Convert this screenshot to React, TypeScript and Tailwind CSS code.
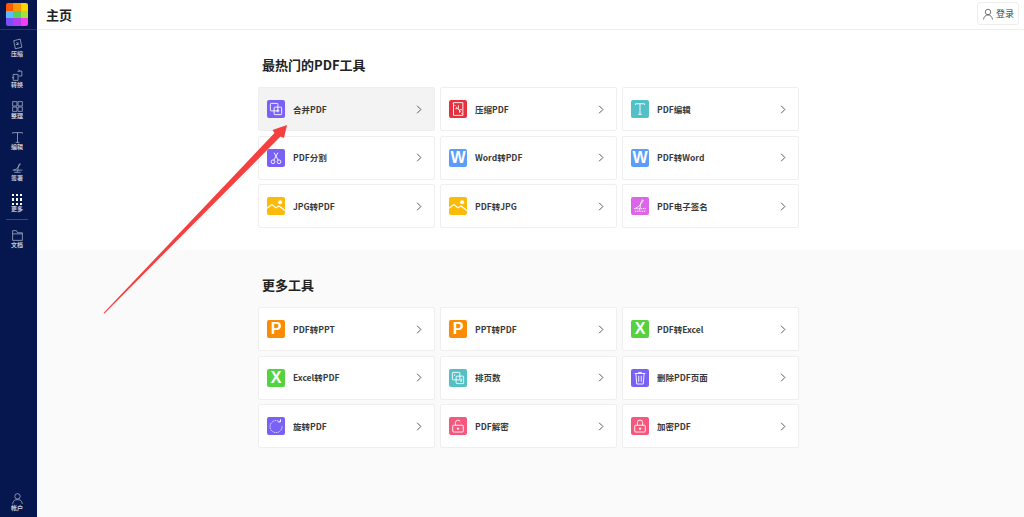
import React from "react";

const S = (p: { children: React.ReactNode; c?: string; w?: number }) => (
  <svg viewBox="0 0 24 24" fill="none" stroke={p.c ?? "#fff"} strokeWidth={p.w ?? 1.2} className="w-full h-full">
    {p.children}
  </svg>
);

const glyph: Record<string, React.ReactNode> = {
  merge: <S><rect x="4.5" y="4.5" width="10" height="10" rx="1" /><rect x="9.5" y="9.5" width="10" height="10" rx="1" /><path d="M14.5 12.500v4M12.500 14.500h4" /></S>,
  compress: <S><path d="M6 3.500h12.500v17H6z" /><path d="M5 4l14 16" strokeDasharray="2 1.500" /><path d="M12.500 7v4.500H8.500M14 17v-4h3.500" /></S>,
  text: <S><path d="M6 5h12M12 5v14M9.500 19h5M6 5v1.500M18 5v1.500" /></S>,
  cut: <S><circle cx="8" cy="17" r="2.500" /><circle cx="16" cy="17" r="2.500" /><path d="M9 15L14.500 5M15 15L9.500 5" /></S>,
  image: <svg viewBox="0 0 24 24" className="w-full h-full"><circle cx="17.500" cy="7" r="2.600" fill="#fff" /><path d="M0 15l6.500-5 5.500 4.500 4-2.500 8 6" fill="none" stroke="#fff" strokeWidth="1.600" /></svg>,
  sign: <S><path d="M4 15.500h16M5 19h14" strokeDasharray="2 1" /><path d="M6 15c3-1 6-4 8-7 1-2 3-3 2-4-1-1-3 3-3.500 7-.3 3-.5 6-1.500 7" /></S>,
  pages: <S><rect x="4.500" y="4.500" width="10" height="10" rx="1" /><rect x="9.500" y="9.500" width="10" height="10" rx="1" /><path d="M7.500 7v2M15.500 13.500h1.500v1.500h-1.500v1.500h1.500" /></S>,
  trash: <S><path d="M5 6h14M10 6V4.500h4V6M6.500 6l1.200 14h8.600l1.200-14M10.300 9v8M13.700 9v8" /></S>,
  rotate: <S><path d="M17 6.500A8 8 0 1 0 20 12" strokeDasharray="1.500 1" /><path d="M14.500 6.500h3.500V3" /></S>,
  unlock: <S><rect x="5" y="11" width="14" height="9" rx="1" /><path d="M8.500 11V7.500a3.500 3.500 0 0 1 6.500-1.500" /><circle cx="12" cy="15.500" r="1" fill="#fff" /></S>,
  lock: <S><rect x="5" y="11" width="14" height="9" rx="1" /><path d="M8.500 11V7.500a3.500 3.500 0 0 1 7 0V11" /><circle cx="12" cy="15.500" r="1" fill="#fff" /></S>,
};

type T = { label: string; bg: string; g?: string; l?: string; hover?: boolean };

const hot: T[] = [
  { label: "合并PDF", bg: "bg-[#7a61f5]", g: "merge", hover: true },
  { label: "压缩PDF", bg: "bg-[#e5323f]", g: "compress" },
  { label: "PDF编辑", bg: "bg-[#53c0c8]", g: "text" },
  { label: "PDF分割", bg: "bg-[#7a61f5]", g: "cut" },
  { label: "Word转PDF", bg: "bg-[#5a9dfb]", l: "W" },
  { label: "PDF转Word", bg: "bg-[#5a9dfb]", l: "W" },
  { label: "JPG转PDF", bg: "bg-[#fbbb08]", g: "image" },
  { label: "PDF转JPG", bg: "bg-[#fbbb08]", g: "image" },
  { label: "PDF电子签名", bg: "bg-[#dc66e8]", g: "sign" },
];

const more: T[] = [
  { label: "PDF转PPT", bg: "bg-[#fb8a05]", l: "P" },
  { label: "PPT转PDF", bg: "bg-[#fb8a05]", l: "P" },
  { label: "PDF转Excel", bg: "bg-[#56d13f]", l: "X" },
  { label: "Excel转PDF", bg: "bg-[#56d13f]", l: "X" },
  { label: "排页数", bg: "bg-[#53c0c8]", g: "pages" },
  { label: "删除PDF页面", bg: "bg-[#7a61f5]", g: "trash" },
  { label: "旋转PDF", bg: "bg-[#7a61f5]", g: "rotate" },
  { label: "PDF解密", bg: "bg-[#f5577d]", g: "unlock" },
  { label: "加密PDF", bg: "bg-[#f5577d]", g: "lock" },
];

function Card({ t }: { t: T }) {
  return (
    <div className={`h-[44px] flex items-center pl-[8px] pr-[12px] rounded-[2px] border border-[#efefef] ${t.hover ? "bg-[#f3f3f3]" : "bg-white"}`}>
      <div className={`w-[18px] h-[18px] rounded-[2px] shrink-0 overflow-hidden flex items-center justify-center ${t.bg}`}>
        {t.g ? glyph[t.g] : <span className="text-white text-[16px] leading-none font-bold font-['Liberation_Sans',sans-serif]">{t.l}</span>}
      </div>
      <span className="ml-[8px] flex-1 text-[8.500px] font-bold text-[#3a3a3a] whitespace-nowrap">{t.label}</span>
      <svg viewBox="0 0 8 12" className="w-[6px] h-[9px]" fill="none" stroke="#555" strokeWidth="1.300"><path d="M1.500 1l5 5-5 5" /></svg>
    </div>
  );
}

const Grid = ({ items }: { items: T[] }) => (
  <div className="grid grid-cols-[177px_177px_177px] gap-x-[5px] gap-y-[4.500px] ml-[221px] w-[541px]">
    {items.map((t) => <Card key={t.label} t={t} />)}
  </div>
);

const nav: [string, React.ReactNode][] = [
  ["压缩", <path d="M5 5l12-3 3 15-12 3zM10 8l4 4M13 8v4H9" />],
  ["转换", <path d="M4 10h9v11H4zM12 4h8v9h-6M2 15l2 2 2-2M14 1l2 2-2 2" />],
  ["整理", <path d="M3 3h8v8H3zM13 3h8v8h-8zM3 13h8v8H3zM13 13h8v8h-8z" />],
  ["编辑", <path d="M3 3h18M12 3v18M8.500 21h7M3 3v2M21 3v2" />],
  ["签署", <path d="M3 15h18M6 19h12M5 15c4-1 8-4 10-8 1-2 3-3 2-4-1-1-4 4-4 9 0 3-1 6-2 7" />],
];

function NavItem({ label, icon }: { label: string; icon: React.ReactNode }) {
  return (
    <div className="h-[31px] flex flex-col items-center justify-center">
      <div className="w-[13px] h-[13px]">{icon}</div>
      <span className="text-[6px] leading-[8px] font-bold text-[#c3cadf] mt-[-1px]">{label}</span>
    </div>
  );
}

const NavSvg = ({ children }: { children: React.ReactNode }) => (
  <svg viewBox="0 0 24 24" fill="none" stroke="#c3cadf" strokeWidth="1.200" className="w-full h-full">{children}</svg>
);

const colors = ["bg-[#ff5a00]", "bg-[#fb9a05]", "bg-[#ffd500]", "bg-[#59bdfb]", "bg-[#57d05a]", "bg-[#a6e03c]", "bg-[#7a50f5]", "bg-[#b23ff0]", "bg-[#ef3ff0]"];

export default function App() {
  return (
    <div className="relative w-[1024px] h-[517px] overflow-hidden flex bg-white font-['Noto_Sans_CJK_SC','Noto_Sans',sans-serif]">
      <aside className="w-[37px] shrink-0 bg-[#06174f] flex flex-col pr-[3px]">
        <div className="h-[30px] -mr-[3px] border-b border-[#24346a] flex items-center pl-[6px]">
          <div className="w-[22px] h-[23px] grid grid-cols-3 grid-rows-3 rounded-[2px] overflow-hidden">
            {colors.map((c) => <div key={c} className={c} />)}
          </div>
        </div>
        <div className="pt-[2.500px]">
          {nav.map(([l, p]) => <NavItem key={l} label={l} icon={<NavSvg>{p}</NavSvg>} />)}
          <NavItem label="更多" icon={
            <div className="grid grid-cols-3 gap-[2px] p-[1px] w-full h-full">
              {Array.from({ length: 9 }, (_, i) => <div key={i} className="bg-white" />)}
            </div>
          } />
        </div>
        <div className="ml-[6px] w-[22px] mt-[0.500px] mb-[3px] border-t border-[#3a4874]" />
        <NavItem label="文档" icon={<NavSvg><path d="M3 21V3h7l2 4h9v14zM3 9h18" /></NavSvg>} />
        <div className="mt-auto">
          <NavItem label="帐户" icon={<NavSvg><circle cx="12" cy="8" r="5" /><path d="M3 22c1-6 4-8 9-8s8 2 9 8" /></NavSvg>} />
        </div>
      </aside>

      <main className="flex-1 flex flex-col min-w-0">
        <header className="h-[30px] shrink-0 flex items-center justify-between pl-[9px] pr-[5px] border-b border-[#eeeeee] bg-white">
          <span className="text-[13px] font-bold text-[#222]">主页</span>
          <div className="h-[23px] w-[42px] mt-[-2px] flex items-center justify-center gap-[2px] border border-[#eeeeee] rounded-[3px]">
            <svg viewBox="0 0 24 24" fill="none" stroke="#555" strokeWidth="1.600" className="w-[12px] h-[12px]"><circle cx="12" cy="8" r="5.500" /><path d="M3 23c1-6 4-9 9-9s8 3 9 9" /></svg>
            <span className="text-[9px] text-[#444]">登录</span>
          </div>
        </header>

        <section className="h-[220px] shrink-0 bg-white pt-[25px]">
          <h2 className="ml-[225px] h-[20px] leading-[20px] text-[13px] font-bold text-[#222]">最热门的PDF工具</h2>
          <div className="mt-[12px]"><Grid items={hot} /></div>
        </section>

        <section className="flex-1 bg-[#fafafa] pt-[25px]">
          <h2 className="ml-[225px] h-[20px] leading-[20px] text-[13px] font-bold text-[#222]">更多工具</h2>
          <div className="mt-[12px]"><Grid items={more} /></div>
        </section>
      </main>

      <svg className="absolute left-0 top-0 pointer-events-none" width="1024" height="517" viewBox="0 0 1024 517">
        <path d="M103.500 313 L274.500 133 L272.500 130 L287 125 L284 138 L280.500 136.500 L104.500 313.500 Z" fill="#f54040" />
      </svg>
    </div>
  );
}
